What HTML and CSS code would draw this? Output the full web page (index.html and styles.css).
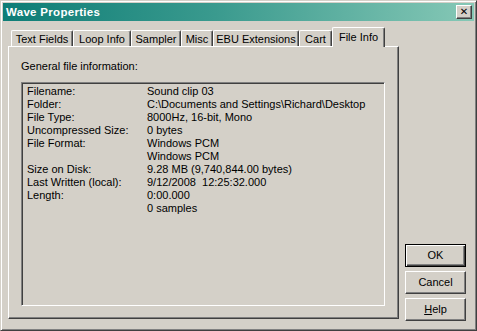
FILE: index.html
```html
<!DOCTYPE html>
<html>
<head>
<meta charset="utf-8">
<link rel="stylesheet" href="styles.css">
</head>
<body>
<div class="window">
  <div class="titlebar">
    <span class="title">Wave Properties</span>
    <span class="close">✕</span>
  </div>
  <div class="client">
    <div class="tabctl">
      <div class="tabs">
        <div class="tab w1">Text Fields</div>
        <div class="tab w2">Loop Info</div>
        <div class="tab w3">Sampler</div>
        <div class="tab w4">Misc</div>
        <div class="tab w5">EBU Extensions</div>
        <div class="tab w6">Cart</div>
        <div class="tab sel w7">File Info</div>
      </div>
      <div class="panel">
        <div class="caption">General file information:</div>
        <div class="infobox">
          <div class="row"><span class="k">Filename:</span><span class="v">Sound clip 03</span></div>
          <div class="row"><span class="k">Folder:</span><span class="v">C:\Documents and Settings\Richard\Desktop</span></div>
          <div class="row"><span class="k">File Type:</span><span class="v">8000Hz, 16-bit, Mono</span></div>
          <div class="row"><span class="k">Uncompressed Size:</span><span class="v">0 bytes</span></div>
          <div class="row"><span class="k">File Format:</span><span class="v">Windows PCM</span></div>
          <div class="row"><span class="k"></span><span class="v">Windows PCM</span></div>
          <div class="row"><span class="k">Size on Disk:</span><span class="v">9.28 MB (9,740,844.00 bytes)</span></div>
          <div class="row"><span class="k">Last Written (local):</span><span class="v">9/12/2008&nbsp; 12:25:32.000</span></div>
          <div class="row"><span class="k">Length:</span><span class="v">0:00.000</span></div>
          <div class="row"><span class="k"></span><span class="v">0 samples</span></div>
        </div>
      </div>
    </div>
    <div class="buttons">
      <div class="btn default"><span class="face">OK</span></div>
      <div class="btn"><span class="face">Cancel</span></div>
      <div class="btn"><span class="face"><u>H</u>elp</span></div>
    </div>
  </div>
</div>
</body>
</html>
```
FILE: styles.css
```css
html, body {
  margin: 0;
  padding: 0;
  background: #d4d0c8;
}
body {
  font-family: "Liberation Sans", Arial, sans-serif;
  font-size: 11px;
  color: #000;
}
.window {
  width: 477px;
  height: 331px;
  box-sizing: border-box;
  background: #d4d0c8;
  border-style: solid;
  border-width: 1px;
  border-color: #d4d0c8 #404040 #404040 #d4d0c8;
  box-shadow: inset 1px 1px 0 #fff, inset -1px -1px 0 #808080;
  padding: 2px;
  display: flex;
  flex-direction: column;
}
.titlebar {
  height: 18px;
  background: linear-gradient(to right, #0e7d76 0%, #3a9a8e 45%, #86c8b6 100%);
  display: flex;
  align-items: center;
  justify-content: space-between;
  padding: 0 2px 0 3px;
}
.title {
  color: #fff;
  font-weight: bold;
  font-size: 11.5px;
  letter-spacing: 0.3px;
}
.close {
  width: 16px;
  height: 14px;
  box-sizing: border-box;
  background: #d4d0c8;
  border-style: solid;
  border-width: 1px;
  border-color: #fff #404040 #404040 #fff;
  box-shadow: inset -1px -1px 0 #808080;
  font-size: 10px;
  font-weight: bold;
  line-height: 12px;
  text-align: center;
  color: #000;
  font-family: "DejaVu Sans", sans-serif;
}
.client {
  display: flex;
  padding: 6px 0 0 5px;
}
.tabctl {
  width: 391px;
  display: flex;
  flex-direction: column;
}
.tabs {
  display: flex;
  align-items: flex-end;
  height: 20px;
  padding-left: 3px;
  margin-bottom: -1px;
}
.tab {
  height: 17px;
  box-sizing: border-box;
  border-style: solid;
  border-width: 1px 1px 0 1px;
  border-color: #fff #404040 #fff #fff;
  border-radius: 2px 2px 0 0;
  box-shadow: inset -1px 0 0 #808080;
  text-align: center;
  line-height: 15px;
  padding-top: 1px;
  white-space: nowrap;
  background: #d4d0c8;
}
.tab.sel {
  height: 20px;
  padding-top: 1px;
  line-height: 16px;
  position: relative;
  z-index: 1;
}
.w1 { width: 62px; }
.w2 { width: 58px; }
.w3 { width: 50px; }
.w4 { width: 32px; }
.w5 { width: 86px; }
.w6 { width: 33px; }
.w7 { width: 53px; }
.panel {
  height: 273px;
  box-sizing: border-box;
  border-style: solid;
  border-width: 1px;
  border-color: #fff #404040 #404040 #fff;
  box-shadow: inset -1px -1px 0 #808080;
  padding: 13px 0 0 12px;
}
.caption {
  line-height: 13px;
  height: 13px;
  white-space: nowrap;
}
.infobox {
  margin-top: 9px;
  width: 364px;
  height: 224px;
  box-sizing: border-box;
  border-style: solid;
  border-width: 1px;
  border-color: #808080 #fff #fff #808080;
  box-shadow: inset 1px 1px 0 #404040, inset -1px -1px 0 #d4d0c8;
  padding: 2px 0 0 5px;
}
.row {
  display: flex;
  height: 13px;
  line-height: 13px;
  white-space: nowrap;
}
.k {
  width: 120px;
  flex: none;
}
.buttons {
  display: flex;
  flex-direction: column;
  gap: 4px;
  margin-left: 6px;
  padding-top: 217px;
}
.btn {
  width: 61px;
  height: 23px;
  box-sizing: border-box;
  border-style: solid;
  border-width: 1px;
  border-color: #fff #404040 #404040 #fff;
  box-shadow: inset -1px -1px 0 #808080;
  display: flex;
  align-items: center;
  justify-content: center;
}
.btn.default {
  border: 1px solid #000;
  box-shadow: inset 1px 1px 0 #fff, inset -1px -1px 0 #404040, inset -2px -2px 0 #808080;
}
.face {
  line-height: 13px;
}
```
